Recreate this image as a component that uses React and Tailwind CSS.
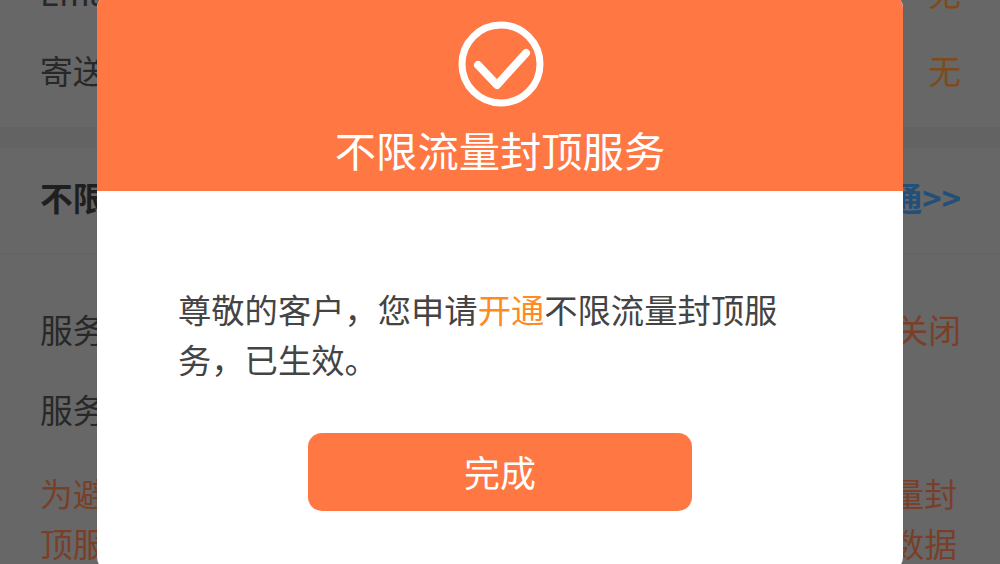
const font = { fontFamily: '"Noto Sans CJK SC", "Noto Sans", sans-serif' };

const Row = ({ left, right, rightClass, className }) => (
    <div className={`flex items-center justify-between ${className}`}>
        <span>{left}</span>
        <span className={rightClass}>{right}</span>
    </div>
);

export default function App() {
    return (
        <div
            className="relative h-[564px] w-[1000px] overflow-hidden bg-[#676767] text-[32.75px] leading-none text-[#282828]"
            style={font}
        >
            {/* page behind the overlay */}
            <div className="-mt-[47px] pl-10 pr-[39px]">
                <Row className="h-[78px]" left="Email地址" right="无" rightClass="text-[#7f4a1c]" />
                <Row className="h-[78px]" left="寄送方式" right="无" rightClass="text-[#7f4a1c]" />
            </div>
            <div className="mt-[18px] h-[20px] border-t border-[#626262] bg-[#636363]" />
            <div className="flex h-[107px] items-center justify-between border-y border-[#626262] pb-[7px] pl-10 pr-[39px] font-bold">
                <span className="text-[#1f1f1f]">不限流量封顶服务</span>
                <span className="text-[#234f78]">开通&gt;&gt;</span>
            </div>
            <div className="pl-10 pr-[39px]">
                <Row className="mt-[36px] h-[79px]" left="服务状态" right="关闭" rightClass="text-[#7a3f28]" />
                <Row className="h-[80px]" left="服务说明" right="" />
                <p className="mt-[19px] w-[917px] leading-[50px] text-[#7a3f28]">
                    为避免您因使用流量超额产生高额费用，建议您开通不限流量封顶服务，达到封顶值后将暂停您的上网功能，不再使用移动数据
                </p>
            </div>

            {/* dialog */}
            <div className="absolute -top-[6px] left-[97px] flex h-[577px] w-[806px] flex-col overflow-hidden rounded-[14px] bg-white">
                <div className="flex h-[197px] shrink-0 flex-col items-center bg-[#ff7743]">
                    <svg className="mt-[26px] ml-[1px]" width="88" height="88" viewBox="0 0 88 88" fill="none">
                        <circle cx="44" cy="44" r="39" stroke="white" strokeWidth="7" />
                        <path d="M21 45 L40 65 L69 33" stroke="white" strokeWidth="8" strokeLinecap="round" strokeLinejoin="round" />
                    </svg>
                    <h2 className="mt-[16px] text-[41.3px] font-normal leading-[50px] text-white">不限流量封顶服务</h2>
                </div>
                <p className="mt-[93px] ml-[81px] w-[610px] text-[33.3px] leading-[50px] text-[#444444]">
                    尊敬的客户，您申请<span className="text-[#ff8a1f]">开通</span>不限流量封顶服务，已生效。
                </p>
                <button className="mt-[49px] ml-[211px] h-[78px] w-[384px] rounded-[14px] bg-[#ff7743] pb-[3px] text-[36px] text-white">
                    完成
                </button>
            </div>
        </div>
    );
}
